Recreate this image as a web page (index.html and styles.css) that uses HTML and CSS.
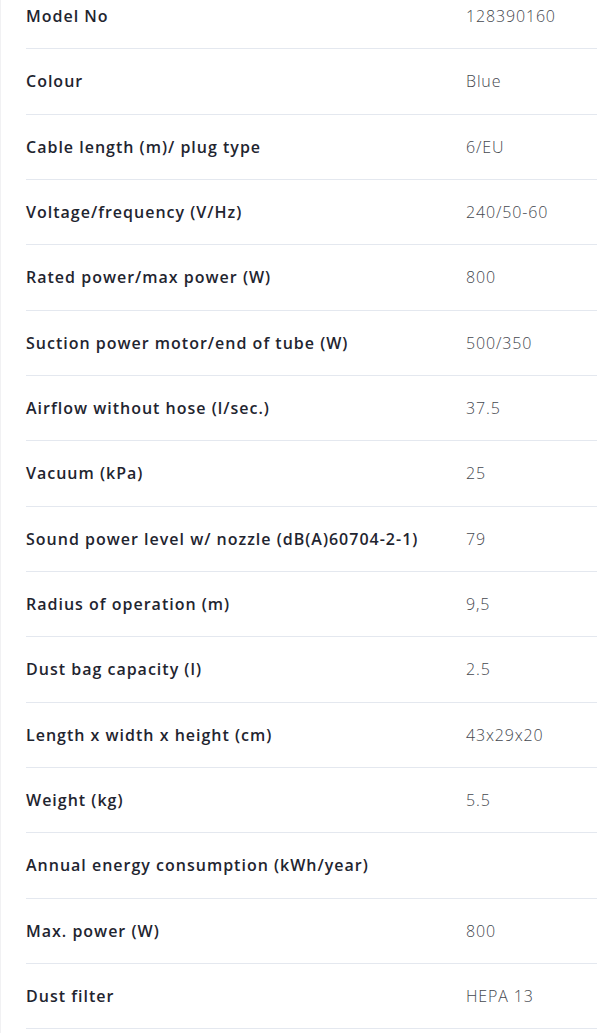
FILE: index.html
```html
<!DOCTYPE html>
<html>
<head>
<meta charset="utf-8">
<link rel="stylesheet" href="styles.css">
</head>
<body>
<div class="page">
  <div class="specs">
    <div class="row"><div class="label">Model No</div><div class="value">128390160</div></div>
    <div class="row"><div class="label">Colour</div><div class="value">Blue</div></div>
    <div class="row"><div class="label">Cable length (m)/ plug type</div><div class="value">6/EU</div></div>
    <div class="row"><div class="label">Voltage/frequency (V/Hz)</div><div class="value">240/50-60</div></div>
    <div class="row"><div class="label">Rated power/max power (W)</div><div class="value">800</div></div>
    <div class="row"><div class="label">Suction power motor/end of tube (W)</div><div class="value">500/350</div></div>
    <div class="row"><div class="label">Airflow without hose (l/sec.)</div><div class="value">37.5</div></div>
    <div class="row"><div class="label">Vacuum (kPa)</div><div class="value">25</div></div>
    <div class="row"><div class="label">Sound power level w/ nozzle (dB(A)60704-2-1)</div><div class="value">79</div></div>
    <div class="row"><div class="label">Radius of operation (m)</div><div class="value">9,5</div></div>
    <div class="row"><div class="label">Dust bag capacity (l)</div><div class="value">2.5</div></div>
    <div class="row"><div class="label">Length x width x height (cm)</div><div class="value">43x29x20</div></div>
    <div class="row"><div class="label">Weight (kg)</div><div class="value">5.5</div></div>
    <div class="row"><div class="label">Annual energy consumption (kWh/year)</div><div class="value"></div></div>
    <div class="row"><div class="label">Max. power (W)</div><div class="value">800</div></div>
    <div class="row"><div class="label">Dust filter</div><div class="value">HEPA 13</div></div>
  </div>
</div>
</body>
</html>
```
FILE: styles.css
```css
html, body {
  margin: 0;
  padding: 0;
  background: #ffffff;
}
body {
  font-family: "Open Sans", "Liberation Sans", sans-serif;
  overflow: hidden;
}
.page {
  width: 600px;
  height: 1033px;
  box-sizing: border-box;
  border-left: 1px solid #f1f1f3;
  overflow: hidden;
}
.specs {
  margin-top: -16px;
  margin-left: 25px;
  margin-right: 3px;
}
.row {
  display: grid;
  grid-template-columns: 440px 1fr;
  align-items: center;
  height: 65.33px;
  box-sizing: border-box;
  border-bottom: 1px solid #e4e8ef;
}
.label {
  font-size: 16px;
  font-weight: 600;
  letter-spacing: 1px;
  color: #1f2530;
}
.value {
  font-size: 16px;
  font-weight: 300;
  letter-spacing: 0.85px;
  color: #45484f;
}
```
